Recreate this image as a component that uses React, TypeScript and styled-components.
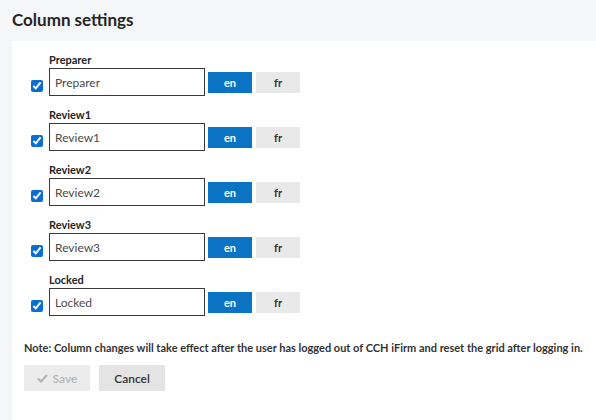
import React, { useState } from "react";
import styled, { createGlobalStyle } from "styled-components";

const GlobalStyle = createGlobalStyle`
  html, body {
    margin: 0;
    padding: 0;
    background: #f5f6f7;
    font-family: "Lato", "Open Sans", sans-serif;
    color: #252525;
  }
`;

const Page = styled.div`
  width: 596px;
  height: 420px;
  display: flex;
  flex-direction: column;
  padding-left: 12px;
  box-sizing: border-box;
  overflow: hidden;
`;

const Title = styled.h1`
  margin: 0;
  height: 41px;
  display: flex;
  align-items: center;
  font-size: 17px;
  font-weight: 700;
  color: #252525;
  padding-bottom: 3px;
  box-sizing: border-box;
`;

const Panel = styled.div`
  flex: 1;
  background: #fff;
  padding: 12px 0 0 12px;
  display: flex;
  flex-direction: column;
`;

const FieldList = styled.div`
  display: flex;
  flex-direction: column;
  gap: 12px;
`;

const Field = styled.div`
  display: grid;
  grid-template-columns: 12px auto;
  column-gap: 6px;
  row-gap: 1px;
  padding-left: 7px;
`;

const Label = styled.label`
  grid-column: 2;
  font-size: 11px;
  font-weight: 700;
  line-height: 14px;
`;

const Check = styled.input`
  grid-column: 1;
  align-self: end;
  margin: 0 0 4px 0;
  width: 12px;
  height: 12px;
  accent-color: #0a6ed1;
`;

const Controls = styled.div`
  grid-column: 2;
  display: flex;
  align-items: center;
  gap: 3px;
`;

const TextBox = styled.input`
  width: 156px;
  height: 28px;
  box-sizing: border-box;
  border: 1px solid #3a3a3a;
  padding: 0 5px;
  font-family: inherit;
  font-size: 12px;
  color: #4a4a4a;
  outline: none;
`;

const LangButton = styled.button<{ $active?: boolean }>`
  width: 44px;
  height: 21px;
  border: none;
  margin-left: ${(p) => (p.$active ? "0" : "1px")};
  background: ${(p) => (p.$active ? "#0a73c4" : "#e9e9e9")};
  color: ${(p) => (p.$active ? "#fff" : "#333")};
  font-family: inherit;
  font-size: 11px;
  font-weight: 700;
  cursor: pointer;
`;

const Note = styled.p`
  margin: 25px 0 0 0;
  font-size: 11px;
  font-weight: 700;
  color: #333;
`;

const Actions = styled.div`
  display: flex;
  gap: 9px;
  margin-top: 11px;
`;

const ActionButton = styled.button<{ $disabled?: boolean }>`
  height: 26px;
  width: 66px;
  padding: 0;
  border: none;
  background: ${(p) => (p.$disabled ? "#ececec" : "#e4e4e4")};
  color: ${(p) => (p.$disabled ? "#b5b5b5" : "#333")};
  font-family: inherit;
  font-size: 12px;
  font-weight: 600;
  display: flex;
  align-items: center;
  justify-content: center;
  gap: 5px;
`;

const columns = ["Preparer", "Review1", "Review2", "Review3", "Locked"];

const CheckIcon = () => (
  <svg width="11" height="9" viewBox="0 0 11 9">
    <path d="M1 4.5 L4 7.5 L10 1" stroke="#b5b5b5" strokeWidth="2.2" fill="none" />
  </svg>
);

export default function App() {
  const [values, setValues] = useState(columns);
  return (
    <>
      <GlobalStyle />
      <Page>
        <Title>Column settings</Title>
        <Panel>
          <FieldList>
            {columns.map((name, i) => (
              <Field key={name}>
                <Label>{name}</Label>
                <Check type="checkbox" defaultChecked />
                <Controls>
                  <TextBox
                    value={values[i]}
                    onChange={(e) => {
                      const next = [...values];
                      next[i] = e.target.value;
                      setValues(next);
                    }}
                  />
                  <LangButton $active>en</LangButton>
                  <LangButton>fr</LangButton>
                </Controls>
              </Field>
            ))}
          </FieldList>
          <Note>
            Note: Column changes will take effect after the user has logged out of CCH
            iFirm and reset the grid after logging in.
          </Note>
          <Actions>
            <ActionButton $disabled>
              <CheckIcon />
              Save
            </ActionButton>
            <ActionButton>Cancel</ActionButton>
          </Actions>
        </Panel>
      </Page>
    </>
  );
}
